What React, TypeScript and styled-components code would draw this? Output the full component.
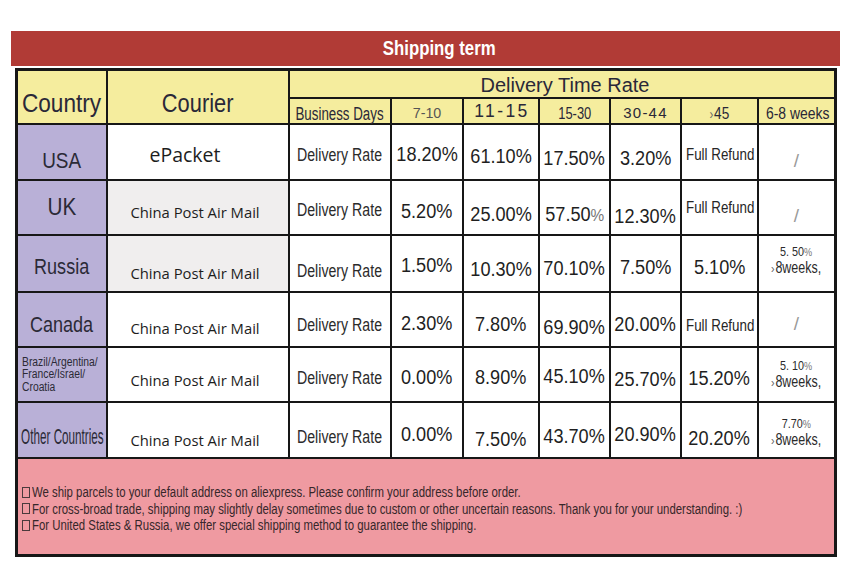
import React from "react";
import styled, { createGlobalStyle, css } from "styled-components";

const ARIAL = `"Liberation Sans", Arial, sans-serif`;
const OPEN = `"Open Sans", "Noto Sans", sans-serif`;

const GlobalStyle = createGlobalStyle`
  html, body { margin: 0; padding: 0; background: #ffffff; }
  * { box-sizing: border-box; }
`;

const Page = styled.div`
  width: 850px;
  height: 588px;
  padding-top: 31px;
  background: #ffffff;
`;

/* Arial-Narrow look: Liberation Sans squeezed horizontally */
const Cond = styled.span<{ $sx?: number; $origin?: string }>`
  display: inline-block;
  white-space: nowrap;
  transform: scaleX(${(p) => p.$sx ?? 0.82});
  transform-origin: ${(p) => p.$origin ?? "center"};
`;

const TitleBar = styled.div`
  margin-left: 11px;
  width: 829px;
  height: 35px;
  background: #b13b36;
  display: flex;
  align-items: center;
  justify-content: center;
  padding-left: 28px;
  color: #ffffff;
  font-family: ${ARIAL};
  font-weight: 700;
  font-size: 20px;
`;

const Table = styled.div`
  margin: 2px 0 0 15px;
  width: 822px;
  display: grid;
  grid-template-columns: 88px 180px 100px 70px 74px 69px 69px 75px 75px;
  grid-template-rows: 26px 24px 54px 53px 55px 53px 53px 54px 95px;
  gap: 2px;
  padding: 3px;
  background: #171717;
`;

const shift = css<{ $dy?: number; $dx?: number }>`
  padding-top: ${(p) => Math.max(0, 2 * (p.$dy ?? 0))}px;
  padding-bottom: ${(p) => Math.max(0, -2 * (p.$dy ?? 0))}px;
  padding-left: ${(p) => Math.max(0, 2 * (p.$dx ?? 0))}px;
  padding-right: ${(p) => Math.max(0, -2 * (p.$dx ?? 0))}px;
`;

const HeadCell = styled.div<{ $size: number; $spacing?: number; $color?: string; $dy?: number; $dx?: number; $tall?: boolean; $wide?: boolean }>`
  background: #f5ed9e;
  display: flex;
  align-items: center;
  justify-content: center;
  color: ${(p) => p.$color ?? "#2a2838"};
  font-family: ${ARIAL};
  font-size: ${(p) => p.$size}px;
  letter-spacing: ${(p) => p.$spacing ?? 0}px;
  white-space: nowrap;
  line-height: 1;
  ${(p) => p.$tall && "grid-row: span 2;"}
  ${(p) => p.$wide && "grid-column: 3 / -1;"}
  ${shift}
`;

const Thin = styled.span`
  color: #666;
  font-size: 0.85em;
  margin-right: 1px;
`;

const CountryCell = styled.div<{ $size: number; $dy?: number; $dx?: number; $left?: boolean }>`
  background: #b9b0d7;
  display: flex;
  align-items: center;
  justify-content: ${(p) => (p.$left ? "flex-start" : "center")};
  color: #2b2a36;
  font-family: ${ARIAL};
  font-size: ${(p) => p.$size}px;
  line-height: ${(p) => (p.$left ? "12.5px" : "1")};
  white-space: nowrap;
  ${shift}
`;

const MultiName = styled.div`
  display: flex;
  flex-direction: column;
  align-items: flex-start;
`;

const CourierCell = styled.div<{ $gray?: boolean; $big?: boolean; $dy?: number; $dx?: number }>`
  background: ${(p) => (p.$gray ? "#f0eeee" : "#ffffff")};
  display: flex;
  align-items: center;
  justify-content: center;
  color: #1d1d1d;
  font-family: ${OPEN};
  font-size: ${(p) => (p.$big ? 19.5 : 14.8)}px;
  line-height: 1;
  white-space: nowrap;
  ${shift}
`;

const LabelCell = styled.div<{ $dy?: number; $dx?: number }>`
  background: #ffffff;
  display: flex;
  align-items: center;
  justify-content: center;
  color: #2b2b2b;
  font-family: ${ARIAL};
  font-size: 17.5px;
  line-height: 1;
  white-space: nowrap;
  ${shift}
`;

const PercentCell = styled.div<{ $dy?: number; $dx?: number }>`
  background: #ffffff;
  display: flex;
  align-items: center;
  justify-content: center;
  color: #1f1f1f;
  font-family: ${ARIAL};
  font-size: 19.5px;
  line-height: 1;
  white-space: nowrap;
  ${shift}
`;

const SoftPct = styled.span`
  color: #777;
  font-size: 0.85em;
`;

const RefundCell = styled.div<{ $dy?: number; $dx?: number }>`
  background: #ffffff;
  display: flex;
  align-items: center;
  justify-content: center;
  color: #262626;
  font-family: ${ARIAL};
  font-size: 16.5px;
  line-height: 1;
  white-space: nowrap;
  ${shift}
`;

const SlashCell = styled.div<{ $dy?: number; $dx?: number }>`
  background: #ffffff;
  display: flex;
  align-items: center;
  justify-content: center;
  color: #9a9a9a;
  font-family: ${ARIAL};
  font-size: 19px;
  font-weight: 300;
  line-height: 1;
  ${shift}
`;

const NoteCell = styled.div<{ $dy?: number; $dx?: number }>`
  background: #ffffff;
  display: flex;
  flex-direction: column;
  align-items: center;
  justify-content: center;
  color: #2b2b2b;
  font-family: ${ARIAL};
  line-height: 15px;
  white-space: nowrap;
  ${shift}
`;

const NoteTop = styled.span`
  font-size: 13.5px;
`;

const NoteBottom = styled.span`
  font-size: 16px;
`;

const FooterCell = styled.div`
  grid-column: 1 / -1;
  background: #ef9aa1;
  padding: 25px 0 0 4px;
  color: #36272a;
  font-family: ${ARIAL};
  font-size: 15.5px;
  line-height: 16.5px;
`;

const FooterLine = styled.div`
  display: flex;
  align-items: center;
  white-space: nowrap;
`;

const CheckBox = styled.span`
  display: inline-block;
  width: 8px;
  height: 11px;
  border: 1px solid #4a3a3c;
  margin-right: 2px;
  flex: none;
`;

type Pct = { v: string; dy: number; soft?: boolean };
type Last45 = { kind: "refund"; dy: number } | { kind: "pct"; v: string; dy: number };
type Last = { kind: "slash"; dy: number } | { kind: "note"; top: string; dy: number };

type Row = {
  country: string;
  cSize: number;
  cDy: number;
  cSx: number;
  multi?: boolean;
  courier: string;
  big?: boolean;
  gray?: boolean;
  courierDy: number;
  labelDy: number;
  pcts: Pct[];
  l45: Last45;
  last: Last;
};

const rows: Row[] = [
  {
    country: "USA", cSize: 22, cDy: 9, cSx: 0.86, courier: "ePacket", big: true, courierDy: 3, labelDy: 4,
    pcts: [{ v: "18.20%", dy: 3 }, { v: "61.10%", dy: 5 }, { v: "17.50%", dy: 7 }, { v: "3.20%", dy: 7 }],
    l45: { kind: "refund", dy: 2 }, last: { kind: "slash", dy: 8 },
  },
  {
    country: "UK", cSize: 23, cDy: 0, cSx: 0.9, courier: "China Post Air Mail", gray: true, courierDy: 4.5, labelDy: 3.5,
    pcts: [{ v: "5.20%", dy: 4.5 }, { v: "25.00%", dy: 7.5 }, { v: "57.50", dy: 7.5, soft: true }, { v: "12.30%", dy: 9.5 }],
    l45: { kind: "refund", dy: 0 }, last: { kind: "slash", dy: 7.5 },
  },
  {
    country: "Russia", cSize: 22, cDy: 3.5, cSx: 0.82, courier: "China Post Air Mail", gray: true, courierDy: 9.5, labelDy: 8.5,
    pcts: [{ v: "1.50%", dy: 2.5 }, { v: "10.30%", dy: 6.5 }, { v: "70.10%", dy: 5.5 }, { v: "7.50%", dy: 4.5 }],
    l45: { kind: "pct", v: "5.10%", dy: 4.5 }, last: { kind: "note", top: "5. 50", dy: -3.5 },
  },
  {
    country: "Canada", cSize: 22, cDy: 5.5, cSx: 0.82, courier: "China Post Air Mail", courierDy: 8.5, labelDy: 6.5,
    pcts: [{ v: "2.30%", dy: 4.5 }, { v: "7.80%", dy: 5.5 }, { v: "69.90%", dy: 8.5 }, { v: "20.00%", dy: 5.5 }],
    l45: { kind: "refund", dy: 5.5 }, last: { kind: "slash", dy: 3.5 },
  },
  {
    country: "Brazil/Argentina/\nFrance/Israel/\nCroatia", multi: true, cSize: 12, cDy: 0, cSx: 0.86, courier: "China Post Air Mail", courierDy: 5.5, labelDy: 4.5,
    pcts: [{ v: "0.00%", dy: 3.5 }, { v: "8.90%", dy: 3.5 }, { v: "45.10%", dy: 2.5 }, { v: "25.70%", dy: 5.5 }],
    l45: { kind: "pct", v: "15.20%", dy: 4.5 }, last: { kind: "note", top: "5. 10", dy: -0.5 },
  },
  {
    country: "Other Countries", cSize: 22.5, cDy: 7, cSx: 0.52, courier: "China Post Air Mail", courierDy: 10, labelDy: 8,
    pcts: [{ v: "0.00%", dy: 5 }, { v: "7.50%", dy: 10 }, { v: "43.70%", dy: 7 }, { v: "20.90%", dy: 5 }],
    l45: { kind: "pct", v: "20.20%", dy: 9 }, last: { kind: "note", top: "7.70", dy: 2 },
  },
];

const notes = [
  "We ship parcels to your default address on aliexpress. Please confirm your address before order.",
  "For cross-broad trade, shipping may slightly delay sometimes due to custom or other uncertain reasons. Thank you for your understanding. :)",
  "For United States & Russia, we offer special shipping method to guarantee the shipping.",
];

function CountryContent({ row }: { row: Row }) {
  if (row.multi) {
    return (
      <MultiName>
        {row.country.split("\n").map((l) => (
          <Cond key={l} $sx={row.cSx} $origin="left center">{l}</Cond>
        ))}
      </MultiName>
    );
  }
  return <Cond $sx={row.cSx}>{row.country}</Cond>;
}

export default function App() {
  return (
    <Page>
      <GlobalStyle />
      <TitleBar>
        <Cond $sx={0.84}>Shipping term</Cond>
      </TitleBar>
      <Table>
        <HeadCell $tall $size={26} $dy={6}><Cond $sx={0.87}>Country</Cond></HeadCell>
        <HeadCell $tall $size={26} $dy={6}><Cond $sx={0.84}>Courier</Cond></HeadCell>
        <HeadCell $wide $size={20} $dx={3} $dy={1}>Delivery Time Rate</HeadCell>
        <HeadCell $size={18} $dy={3}><Cond $sx={0.74}>Business Days</Cond></HeadCell>
        <HeadCell $size={15} $color="#555" $dy={1}><Cond $sx={0.95}>7-10</Cond></HeadCell>
        <HeadCell $size={17.5} $spacing={2.4} $dy={1} $dx={1}>11-15</HeadCell>
        <HeadCell $size={17} $dy={2}><Cond $sx={0.76}>15-30</Cond></HeadCell>
        <HeadCell $size={15} $spacing={1.2} $dy={1}>30-44</HeadCell>
        <HeadCell $size={17} $dy={2}><Cond $sx={0.8}><Thin>›</Thin>45</Cond></HeadCell>
        <HeadCell $size={17} $dy={2} $dx={1}><Cond $sx={0.82}>6-8 weeks</Cond></HeadCell>

        {rows.map((r) => (
          <React.Fragment key={r.country}>
            <CountryCell $size={r.cSize} $dy={r.cDy} $left={r.multi} $dx={r.multi ? 2 : 0}>
              <CountryContent row={r} />
            </CountryCell>
            <CourierCell $gray={r.gray} $big={r.big} $dy={r.courierDy} $dx={r.big ? -13 : -3}>
              {r.courier}
            </CourierCell>
            <LabelCell $dy={r.labelDy}>
              <Cond $sx={0.81}>Delivery Rate</Cond>
            </LabelCell>
            {r.pcts.map((p, i) => (
              <PercentCell key={i} $dy={p.dy}>
                <Cond $sx={0.93}>
                  {p.v}
                  {p.soft && <SoftPct>%</SoftPct>}
                </Cond>
              </PercentCell>
            ))}
            {r.l45.kind === "refund" ? (
              <RefundCell $dy={r.l45.dy} $dx={1}>
                <Cond $sx={0.81}>Full Refund</Cond>
              </RefundCell>
            ) : (
              <PercentCell $dy={r.l45.dy}>
                <Cond $sx={0.93}>{r.l45.v}</Cond>
              </PercentCell>
            )}
            {r.last.kind === "slash" ? (
              <SlashCell $dy={r.last.dy}>/</SlashCell>
            ) : (
              <NoteCell $dy={r.last.dy}>
                <NoteTop>
                  <Cond $sx={0.8}>
                    {r.last.top}
                    <SoftPct>%</SoftPct>
                  </Cond>
                </NoteTop>
                <NoteBottom>
                  <Cond $sx={0.78}>
                    <Thin>›</Thin>8weeks,
                  </Cond>
                </NoteBottom>
              </NoteCell>
            )}
          </React.Fragment>
        ))}

        <FooterCell>
          {notes.map((n) => (
            <FooterLine key={n}>
              <CheckBox />
              <Cond $sx={0.735} $origin="left center">{n}</Cond>
            </FooterLine>
          ))}
        </FooterCell>
      </Table>
    </Page>
  );
}
